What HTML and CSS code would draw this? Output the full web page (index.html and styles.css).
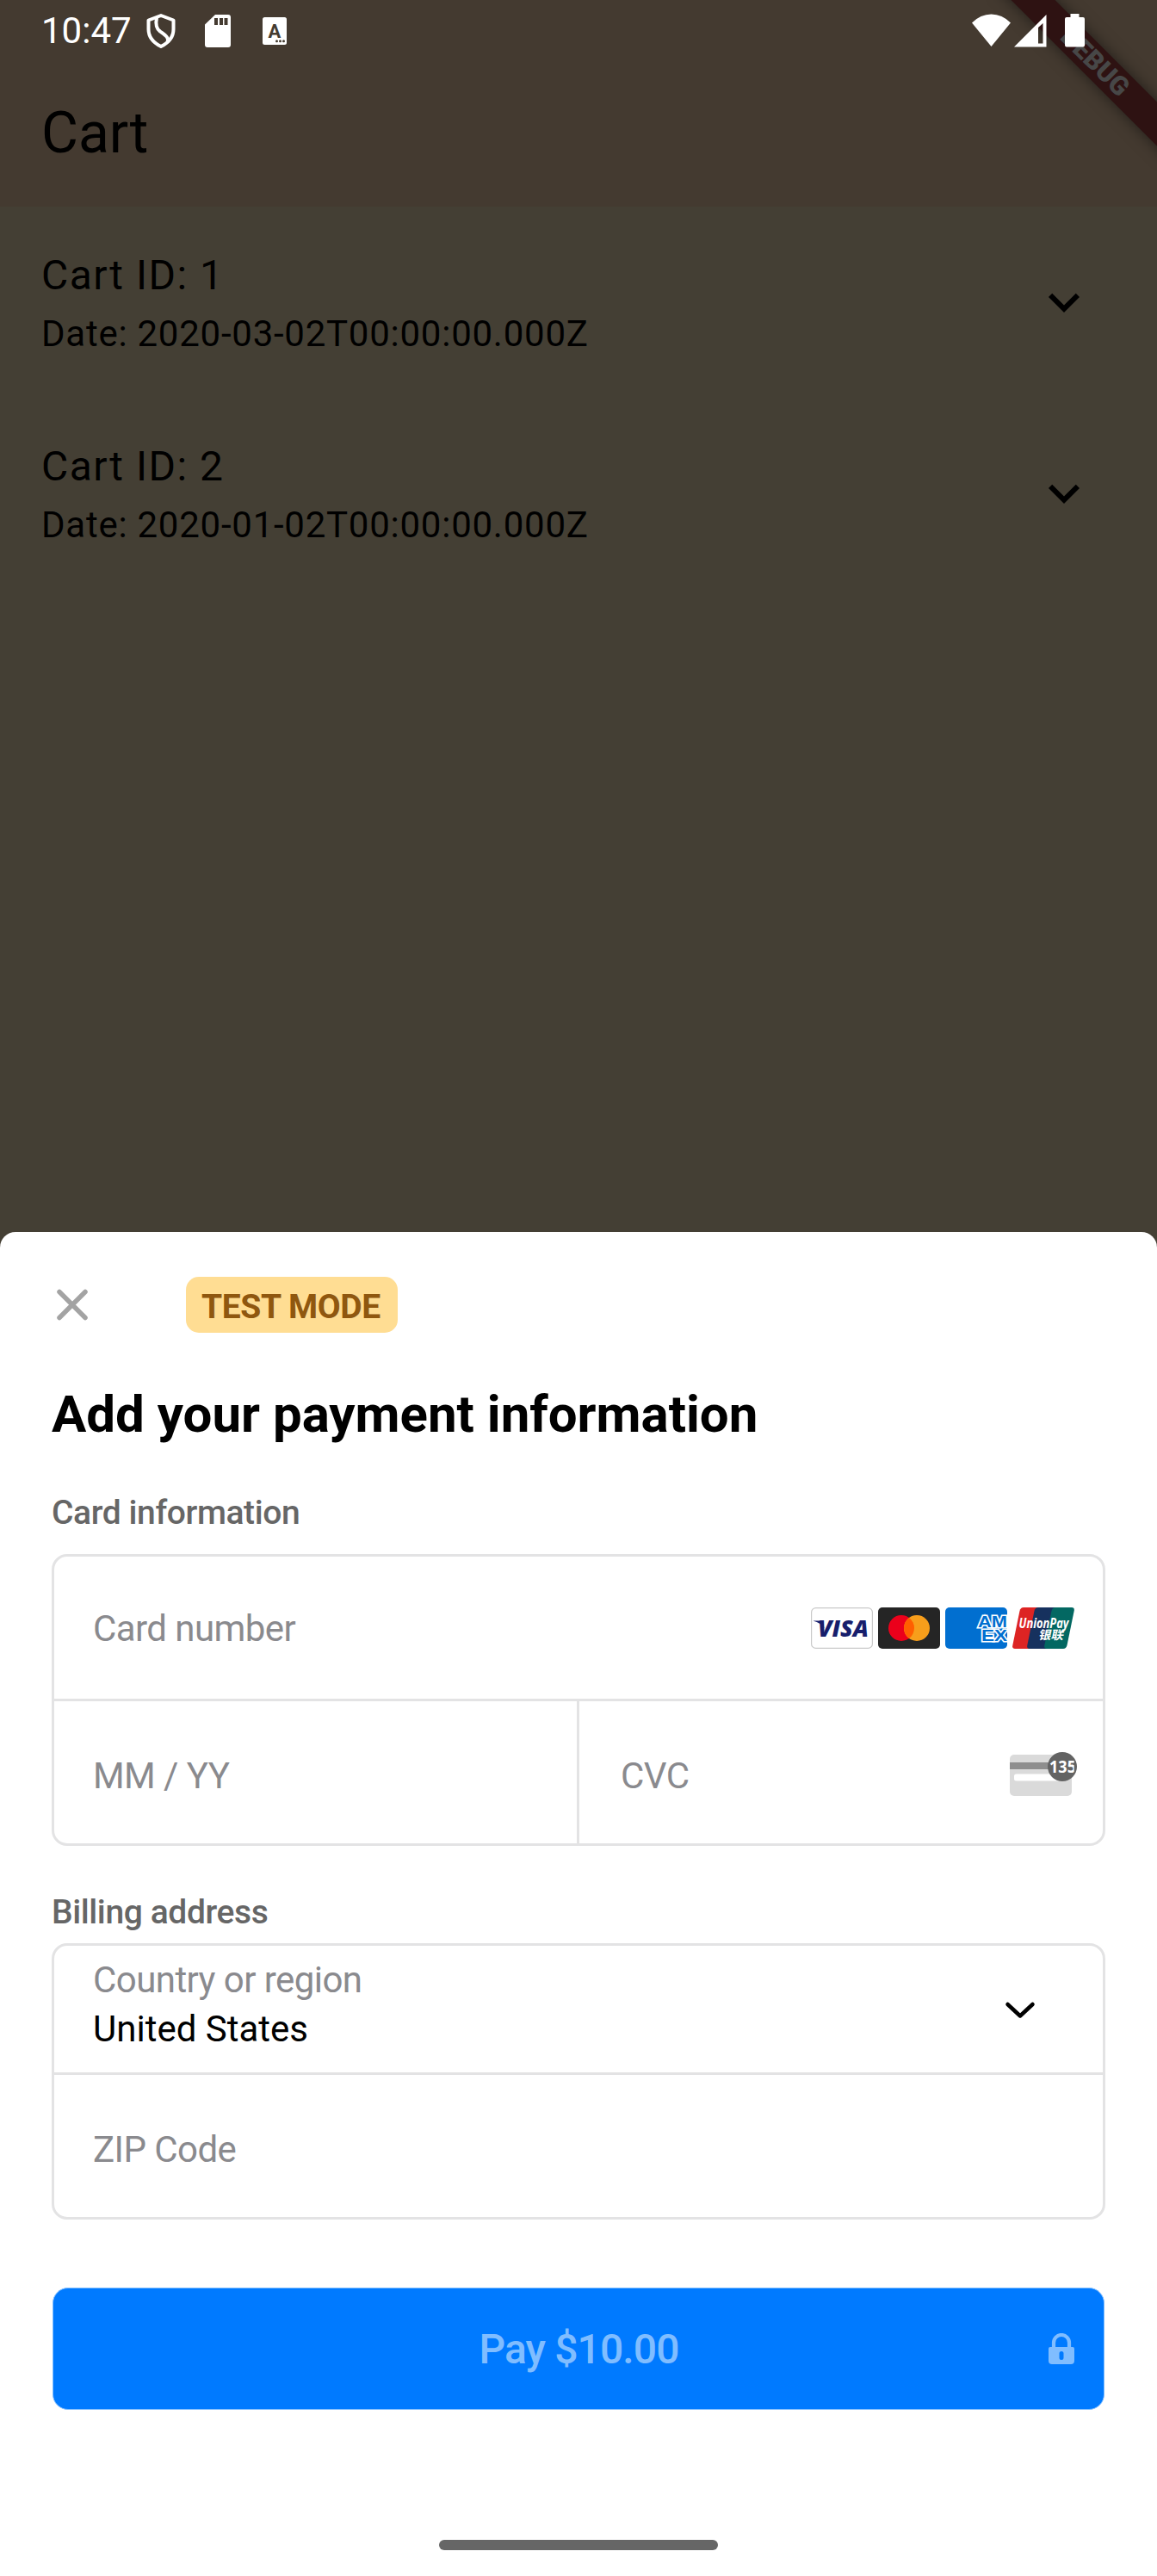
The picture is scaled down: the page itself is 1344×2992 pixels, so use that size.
FILE: index.html
```html
<!DOCTYPE html>
<html lang="en">
<head>
<meta charset="utf-8">
<title>Cart</title>
<link rel="stylesheet" href="styles.css">
</head>
<body>
<div class="screen">
  <header class="app-bar">
    <div class="banner-corner"><div class="banner">DEBUG</div></div>
    <div class="status-bar">
      <span class="clock">10:47</span>
      <svg class="status-left" width="168" height="72" viewBox="170 0 168 72">
        <g fill="none" stroke="#fff" stroke-width="4" stroke-linejoin="round">
          <path d="M187 18 L201.5 23.5 V34 C201.5 43 196 49.5 187 54 C178 49.500 172.500 43 172.500 34 V23.500 Z"/>
          <path d="M182 20.500 C180.500 28 181 33 186 36.500 C192 41 197 44 194.500 49"/>
        </g>
        <path fill="#fff" fill-rule="evenodd" d="M250 17 H265 Q268 17 268 20 V52 Q268 55 265 55 H241 Q238 55 238 52 V28.500 Z M249 21 V29 H253 V21 Z M255 21 V29 H259 V21 Z M260.500 21 V29 H264.500 V21 Z"/>
        <rect x="305" y="20" width="28" height="32" rx="2.500" fill="#fff"/>
        <text x="319" y="43.500" text-anchor="middle" class="glyph-a">A</text>
        <g fill="#443b30"><circle cx="321.500" cy="47.800" r="1.500"/><circle cx="325.500" cy="47.800" r="1.500"/><circle cx="329.500" cy="47.800" r="1.500"/></g>
      </svg>
      <svg class="status-right" width="132" height="72" viewBox="1129 0 132 72">
        <g fill="#fff">
          <path d="M1151.500 54 L1129 26.500 Q1139 16.500 1151.500 16.500 Q1164 16.500 1174 26.500 Z"/>
          <path fill-rule="evenodd" d="M1178 54.500 L1215.500 17 V54.500 Z M1211.500 27 L1206 32 V50.500 H1211.500 Z"/>
          <path d="M1243.500 16 H1253.500 V20 H1258 Q1260 20 1260 22 V52.500 Q1260 54.500 1258 54.500 H1239 Q1237 54.500 1237 52.500 V22 Q1237 20 1239 20 H1243.500 Z"/>
        </g>
      </svg>
    </div>
    <h1 class="app-title">Cart</h1>
  </header>

  <main class="cart-list">
    <div class="cart-tile">
      <div>
        <div class="cart-name">Cart ID: 1</div>
        <div class="cart-date">Date: 2020-03-02T00:00:00.000Z</div>
      </div>
      <svg class="expand" viewBox="0 0 24 24"><path d="M16.590 8.590 12 13.170 7.410 8.590 6 10l6 6 6-6z"/></svg>
    </div>
    <div class="cart-tile">
      <div>
        <div class="cart-name">Cart ID: 2</div>
        <div class="cart-date">Date: 2020-01-02T00:00:00.000Z</div>
      </div>
      <svg class="expand" viewBox="0 0 24 24"><path d="M16.590 8.590 12 13.170 7.410 8.590 6 10l6 6 6-6z"/></svg>
    </div>
  </main>

  <section class="sheet">
    <div class="sheet-bar">
      <svg width="48" height="48" viewBox="0 0 48 48"><path d="M9 8.500 39 38.500M39 8.500 9 38.500" fill="none" stroke="#a3a3a3" stroke-width="5.500" stroke-linecap="round"/></svg>
      <span class="badge">TEST MODE</span>
    </div>
    <h2 class="sheet-title">Add your payment information</h2>

    <h3 class="label">Card information</h3>
    <div class="fields card-fields">
      <div class="field number">
        <span>Card number</span>
        <div class="brands">
          <svg width="72" height="48" viewBox="0 0 72 48">
            <rect x=".6" y=".6" width="70.800" height="46.800" rx="5" fill="#fff" stroke="#c9c9c9" stroke-width="1.200"/>
            <path d="M3 15.500 H10 Q13.500 15.500 14 18.500 L15.500 24 Q11 17.500 3 15.800 Z" fill="#171e6c"/>
            <text x="8" y="34.300" class="visa" textLength="59" lengthAdjust="spacingAndGlyphs">VISA</text>
          </svg>
          <svg width="72" height="48" viewBox="0 0 72 48">
            <rect width="72" height="48" rx="5" fill="#252525"/>
            <circle cx="27" cy="24" r="15" fill="#eb001b"/>
            <circle cx="45" cy="24" r="15" fill="#f79e1b"/>
            <path d="M36 12 A15 15 0 0 1 36 36 A15 15 0 0 1 36 12" fill="#ff5f00"/>
          </svg>
          <svg width="72" height="48" viewBox="0 0 72 48">
            <rect width="72" height="48" rx="5" fill="#016fd0"/>
            <g class="amex">
              <text x="38" y="22.800" textLength="34" lengthAdjust="spacingAndGlyphs">AM</text>
              <text x="42" y="39" textLength="30" lengthAdjust="spacingAndGlyphs">EX</text>
            </g>
          </svg>
          <svg width="72" height="48" viewBox="0 0 72 48">
            <path d="M13 0 H32 L22 48 H3 Q-.5 48 .3 44 L8.500 4 Q9.500 0 13 0 Z" fill="#dd2423"/>
            <path d="M30 0 H50 L40 48 H20 Q16.500 48 17.300 44 L25.500 4 Q26.500 0 30 0 Z" fill="#16315e"/>
            <path d="M50 0 H69 Q72.500 0 71.700 4 L63.500 44 Q62.500 48 59 48 H40 Q36.500 48 37.300 44 L45.500 4 Q46.500 0 50 0 Z" fill="#036862"/>
            <text x="7.500" y="23.800" class="union" textLength="58" lengthAdjust="spacingAndGlyphs">UnionPay</text>
            <text transform="translate(30 37) skewX(-12)" class="union-cjk" textLength="29" lengthAdjust="spacingAndGlyphs">银联</text>
          </svg>
        </div>
      </div>
      <div class="pair">
        <div class="field expiry"><span>MM / YY</span></div>
        <div class="field cvc">
          <span>CVC</span>
          <svg class="cvc-icon" width="78" height="54" viewBox="0 0 78 54">
            <clipPath id="digits"><rect x="44" y="0" width="30.700" height="40"/></clipPath>
            <rect y="4" width="72" height="48" rx="5" fill="#dadada"/>
            <rect y="13" width="72" height="8" fill="#8e8e8e"/>
            <rect x="5" y="26.500" width="60" height="8" rx="2.500" fill="#fff"/>
            <circle cx="61" cy="18" r="17" fill="#636363"/>
            <text x="46" y="25.300" class="digits" clip-path="url(#digits)" textLength="31" lengthAdjust="spacingAndGlyphs">135</text>
          </svg>
        </div>
      </div>
    </div>

    <h3 class="label billing">Billing address</h3>
    <div class="fields">
      <div class="country">
        <div>
          <div class="hint">Country or region</div>
          <div class="value">United States</div>
        </div>
        <svg width="36" height="24" viewBox="0 0 36 24"><path d="M3.500 5 18 18.500 32.500 5" fill="none" stroke="#000" stroke-width="4.500" stroke-linecap="round" stroke-linejoin="round"/></svg>
      </div>
      <div class="field zip"><span>ZIP Code</span></div>
    </div>

    <button class="pay">
      <span>Pay $10.00</span>
      <svg class="lock" width="30" height="36" viewBox="0 0 30 36"><path d="M6 17 V11 A9 9 0 0 1 24 11 V17" fill="none" stroke="#80bdff" stroke-width="4.200"/><path fill="#80bdff" fill-rule="evenodd" d="M2 16 H28 Q30 16 30 18 V32 Q30 36 26 36 H4 Q0 36 0 32 V18 Q0 16 2 16 Z M12.500 23.500 V28.500 A2.500 2.500 0 0 0 17.500 28.500 V23.500 A2.500 2.500 0 0 0 12.500 23.500 Z"/></svg>
    </button>
    <div class="nav-handle"></div>
  </section>
</div>
</body>
</html>
```
FILE: styles.css
```css
* { box-sizing: border-box; }
body { margin: 0; }
svg { display: block; flex: none; }
h1, h2, h3 { margin: 0; }

.screen {
  width: 1344px;
  height: 2992px;
  display: flex;
  flex-direction: column;
  overflow: hidden;
  background: #443f34;
  color: #000;
  font-family: Roboto, sans-serif;
}

/* App bar */
.app-bar {
  position: relative;
  height: 240px;
  background: #443a30;
}
.status-bar {
  position: relative;
  display: flex;
  align-items: center;
  height: 72px;
  padding: 0 84px 0 48px;
  color: #fff;
}
.clock { width: 122px; font-size: 42px; line-height: 72px; }
.status-right { margin-left: auto; margin-right: -1px; }
.glyph-a { font: 700 22px Roboto, sans-serif; fill: #443b30; }
.app-title {
  padding-left: 48px;
  font-size: 66px;
  font-weight: 400;
  line-height: 165px;
}
.banner-corner {
  position: absolute;
  top: 0;
  right: 0;
  width: 240px;
  height: 240px;
  overflow: hidden;
}
.banner {
  position: absolute;
  left: 28px;
  top: 54px;
  width: 280px;
  height: 36px;
  background: #2e1212;
  box-shadow: 0 0 18px rgba(0, 0, 0, .5);
  color: #474747;
  font-size: 30.6px;
  font-weight: 900;
  line-height: 36px;
  text-align: center;
  transform: rotate(45deg);
}

/* Cart list */
.cart-list { flex: 1; }
.cart-tile {
  display: flex;
  justify-content: space-between;
  height: 222px;
  padding: 44px 72px 0 48px;
}
.cart-name { font-size: 48px; line-height: 72px; letter-spacing: 1.5px; }
.cart-date { margin-top: 2px; font-size: 42px; line-height: 60px; letter-spacing: .75px; }
.expand { width: 72px; height: 72px; margin-top: 31px; }

/* Payment sheet */
.sheet {
  display: flex;
  flex-direction: column;
  height: 1561px;
  padding: 52px 60px 0;
  border-radius: 18px 18px 0 0;
  background: #fff;
}
.sheet-bar {
  display: flex;
  align-items: center;
  gap: 108px;
  height: 65px;
}
.badge {
  width: 246px;
  height: 65px;
  padding: 2px 0 0 18px;
  border-radius: 15px;
  background: #ffdd93;
  color: #8f570f;
  font-size: 39px;
  font-weight: 700;
  line-height: 66px;
  letter-spacing: -.4px;
  white-space: nowrap;
}
.sheet-title { margin-top: 59px; font-size: 60px; font-weight: 700; line-height: 72px; }
.label {
  margin: 54px 0 24px;
  color: #666;
  font-size: 39px;
  font-weight: 500;
  line-height: 48px;
  letter-spacing: -.4px;
}
.label.billing { margin: 53px 0 12px; }

.fields {
  border: 3px solid #e3e3e4;
  border-radius: 18px;
  color: #8a8a8e;
  font-size: 42px;
  letter-spacing: -.56px;
}
.field {
  display: flex;
  align-items: center;
  justify-content: space-between;
  height: 165px;
  padding-left: 45px;
}
.number { padding-right: 33px; }
.number > span { padding-top: 2px; }
.brands { display: flex; gap: 6px; padding-top: 1px; letter-spacing: 0; }
.pair { display: flex; border-top: 3px solid #e3e3e4; }
.expiry { width: 607px; padding-top: 8px; }
.cvc { flex: 1; border-left: 3px solid #e3e3e4; padding-right: 30px; padding-left: 48px; }
.cvc > span { padding-top: 8px; }
.cvc-icon { margin-top: 5px; letter-spacing: 0; }
.country {
  display: flex;
  justify-content: space-between;
  height: 147px;
  padding: 11px 78px 0 45px;
  line-height: 57px;
}
.country svg { margin-top: 52px; }
.value { color: #000; letter-spacing: 0; }
.zip { height: 168px; border-top: 3px solid #e3e3e4; padding-top: 8px; }

/* Pay button and gesture bar */
.pay {
  display: grid;
  grid-template-columns: 1fr auto 1fr;
  align-items: center;
  height: 142px;
  margin: 79px 1px 0;
  padding: 0 34px;
  border: 1px solid #7fbdff;
  border-radius: 18px;
  background: #007aff;
  color: #80bdff;
  font: 500 48px/56px Roboto, sans-serif;
  letter-spacing: -.9px;
}
.pay span { grid-column: 2; padding: 2px 0 0 1px; }
.lock { justify-self: end; }
.nav-handle {
  align-self: center;
  width: 324px;
  height: 12px;
  margin-top: 151px;
  border-radius: 6px;
  background: #666;
}

/* Card brand lettering */
.visa { font: italic 800 27px "Open Sans", sans-serif; fill: #171e6c; }
.amex text {
  font: 700 19px/1 "Liberation Sans", sans-serif;
  fill: #016fd0;
  stroke: #fff;
  stroke-width: 3px;
  paint-order: stroke;
}
.union { font: italic 700 15.5px "Open Sans", sans-serif; fill: #fff; }
.union-cjk { font: 700 14px "Noto Sans CJK SC", sans-serif; fill: #fff; }
.digits { font: 700 19px "Noto Sans", sans-serif; fill: #fff; }
```
